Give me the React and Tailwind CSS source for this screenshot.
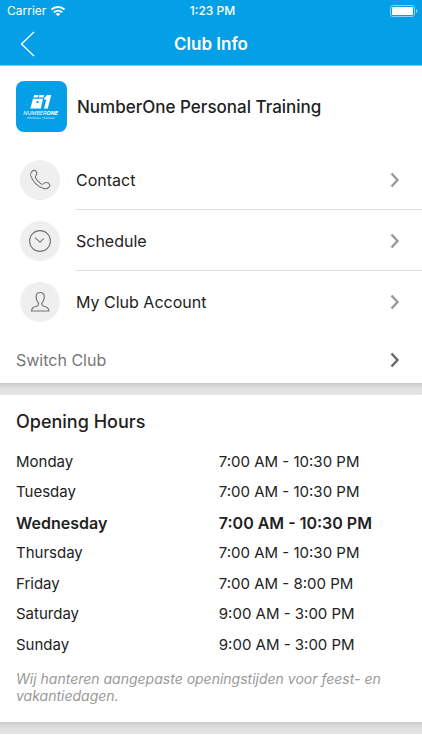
import React from 'react';

const menuItems = [
    { label: 'Contact', icon: PhoneIcon },
    { label: 'Schedule', icon: ClockIcon },
    { label: 'My Club Account', icon: PersonIcon },
];

const openingHours = [
    { day: 'Monday', hours: '7:00 AM - 10:30 PM' },
    { day: 'Tuesday', hours: '7:00 AM - 10:30 PM' },
    { day: 'Wednesday', hours: '7:00 AM - 10:30 PM', today: true },
    { day: 'Thursday', hours: '7:00 AM - 10:30 PM' },
    { day: 'Friday', hours: '7:00 AM - 8:00 PM' },
    { day: 'Saturday', hours: '9:00 AM - 3:00 PM' },
    { day: 'Sunday', hours: '9:00 AM - 3:00 PM' },
];

function PhoneIcon() {
    return (
        <svg width="24" height="24" viewBox="0 0 24 24" fill="none" stroke="#777" strokeWidth="1.1" strokeLinejoin="round" aria-hidden="true">
            <path d="M4.2 3.2C5.1 2.2 7 2.1 7.9 3.2C9 4.6 9.1 6.3 8.1 7.3C7.1 8.3 7 9 7.6 10.1C8.9 12.4 10.9 14.5 13.2 15.9C14.2 16.5 15 16.4 15.8 15.5C16.8 14.4 18.5 14.2 20.3 15.1C21.9 16 22.2 17.5 21.2 18.8C19.9 20.5 17.5 21.2 15 20.3C9.3 18.2 4.7 13.2 2.8 7.9C2.2 6.1 2.8 4.6 4.2 3.2Z" />
        </svg>
    );
}

function ClockIcon() {
    return (
        <svg width="24" height="24" viewBox="0 0 24 24" fill="none" stroke="#777" strokeWidth="1.1" strokeLinecap="round" strokeLinejoin="round" aria-hidden="true">
            <circle cx="12" cy="12" r="10.4" />
            <path d="M7.3 8.9L12 13.2L15.4 9.9" />
        </svg>
    );
}

function PersonIcon() {
    return (
        <svg width="24" height="24" viewBox="0 0 24 24" fill="none" stroke="#777" strokeWidth="1.2" strokeLinejoin="round" aria-hidden="true">
            <path d="M12.2 2.5C9.7 2.5 8.1 4.2 8.1 6.8C8.1 9.4 8.7 11.3 10.2 12.7C10.8 13.5 10.7 14.8 10 15.4C8.7 16.4 6.4 16.6 5 17.7C4 18.5 3.6 19.5 3.4 21H21C20.8 19.5 20.4 18.5 19.4 17.7C18 16.6 15.7 16.4 14.4 15.4C13.7 14.8 13.6 13.5 14.2 12.7C15.7 11.3 16.3 9.4 16.3 6.8C16.3 4.2 14.7 2.5 12.2 2.5Z" />
        </svg>
    );
}

const Chevron = ({ className }) => (
    <svg className={className} width="10" height="16" viewBox="0 0 10 16" fill="none" stroke="currentColor" strokeWidth="2.4" aria-hidden="true">
        <path d="M1.5 1.5L7.5 8L1.5 14.5" />
    </svg>
);

const ClubLogo = () => (
    <svg width="51" height="51" viewBox="0 0 51 51" role="img" aria-label="NumberOne logo">
        <rect width="51" height="51" rx="8" fill="#049fe6" />
        <g fill="#fff">
            {/* Slanted folder-like zero */}
            <path d="M18.3 14H22.4L21.7 16.6H17.3Z" />
            <path d="M23.4 14H28.2L27.4 16.6H22.7Z" />
            <path d="M16.9 17.8H27L24.8 27.6H14.4Z" />
            {/* One */}
            <path d="M30.6 14H35.2L31.8 27.6H28L30.3 18.4H28L28.6 16.2C29.6 16 30.3 15.2 30.6 14Z" />
        </g>
        <path d="M20.8 20H22.8L22.2 22H20.2Z" fill="#049fe6" />
        <text x="7.3" y="34.3" fill="#fff" fontFamily="Inter, sans-serif" fontSize="5.4" fontStyle="italic">
            NUMBER<tspan fontWeight="700">ONE</tspan>
        </text>
        <text x="11" y="38" fill="#cdeeff" fontFamily="Inter, sans-serif" fontSize="2.7">PERSONAL TRAINING</text>
    </svg>
);

const StatusBar = () => (
    <div className="grid grid-cols-3 items-center h-[22px] pl-[7px] pr-1 text-xs">
        <div className="flex items-center gap-1">
            <span>Carrier</span>
            <svg width="16" height="12" viewBox="0 0 16 12" fill="none" stroke="#fff" strokeWidth="2" aria-label="Wi-Fi">
                <path d="M1.5 4.6C5.2 1.1 10.8 1.1 14.5 4.6" />
                <path d="M3.9 7.2C6.3 5.1 9.7 5.1 12.1 7.2" />
                <path d="M8 11.2L5.7 9C7 7.8 9 7.8 10.3 9Z" fill="#fff" stroke="none" />
            </svg>
        </div>
        <span className="text-center font-medium">1:23 PM</span>
        <svg className="justify-self-end" width="28" height="12" viewBox="0 0 28 12" fill="none" aria-label="Battery full">
            <rect x=".5" y=".5" width="24" height="11" rx="2.5" stroke="#8dd3f5" />
            <rect x="2" y="2" width="21" height="8" rx="1" fill="#fff" />
            <path d="M26 4V8C26.9 7.6 27.3 6.9 27.3 6C27.3 5.1 26.9 4.4 26 4Z" fill="#8dd3f5" />
        </svg>
    </div>
);

const App = () => {
    return (
        <div className="min-h-screen bg-white font-['Inter',sans-serif] text-[#222]">
            <header className="bg-[#049fe6] text-white border-b border-[#7dcdf2]">
                <StatusBar />
                <div className="grid grid-cols-[48px_1fr_48px] items-center h-[43px]">
                    <button type="button" aria-label="Back" className="flex items-center h-full pl-5">
                        <svg width="15" height="26" viewBox="0 0 15 26" fill="none" stroke="#fff" strokeWidth="1.3" aria-hidden="true">
                            <path d="M14 1L1.5 13L14 25" />
                        </svg>
                    </button>
                    <h1 className="text-center text-[17px] leading-6 font-semibold">Club Info</h1>
                </div>
            </header>

            <main>
                <section>
                    <div className="flex items-center gap-[10px] px-4 pt-[15px] pb-[17px]">
                        <ClubLogo />
                        <h2 className="text-[17px] leading-6 font-medium">NumberOne Personal Training</h2>
                    </div>

                    <nav>
                        <ul>
                            {menuItems.map(({ label, icon: Icon }) => (
                                <li key={label} className="group">
                                    <a href="#" className="flex items-center gap-4 pl-5">
                                        <span className="flex items-center justify-center size-10 rounded-full bg-[#efefef]">
                                            <Icon />
                                        </span>
                                        <span className="flex flex-1 items-center justify-between h-[61px] pt-0.5 pr-[22px] text-base border-b border-[#dedede] group-last:border-transparent">
                                            {label}
                                            <Chevron className="text-[#999]" />
                                        </span>
                                    </a>
                                </li>
                            ))}
                        </ul>
                        <a href="#" className="flex items-center justify-between h-[51px] pt-1 pl-4 pr-[22px] text-base text-[#777]">
                            Switch Club
                            <Chevron className="text-[#666]" />
                        </a>
                    </nav>
                </section>

                <div className="h-3 bg-linear-to-b from-[#cbcbcb] via-[#e0e0e0] to-[#e4e4e4]" />

                <section className="px-4 pt-[13px] pb-[18px]">
                    <h2 className="text-lg leading-7 font-medium">Opening Hours</h2>
                    <table className="w-full mt-[10px] text-[15px] leading-5">
                        <tbody>
                            {openingHours.map(({ day, hours, today }) => (
                                <tr key={day} className={today ? 'h-[30px] odd:h-[31px] text-base leading-5 font-semibold' : 'h-[30px] odd:h-[31px] font-normal'}>
                                    <th scope="row" className={today ? 'w-[52%] p-0 text-left font-semibold' : 'w-[52%] p-0 text-left font-normal'}>{day}</th>
                                    <td className="p-0">{hours}</td>
                                </tr>
                            ))}
                        </tbody>
                    </table>
                    <p className="mt-[10px] text-sm leading-[17px] italic text-[#999]">
                        Wij hanteren aangepaste openingstijden voor feest- en vakantiedagen.
                    </p>
                </section>

                <div className="h-3 bg-linear-to-b from-[#cbcbcb] via-[#e0e0e0] to-[#e4e4e4]" />
            </main>
        </div>
    );
};

export default App;
